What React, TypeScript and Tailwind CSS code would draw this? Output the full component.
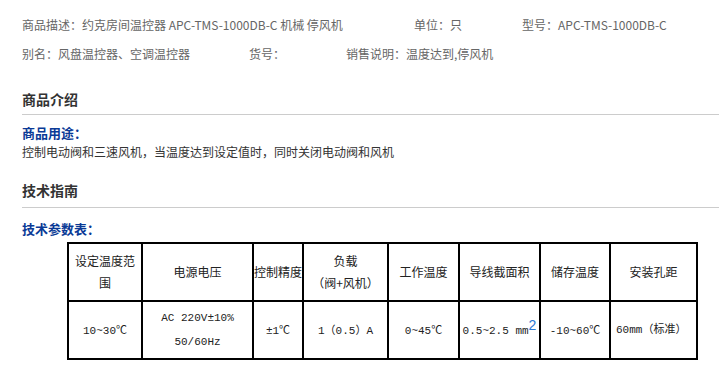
import React from "react";

const cjk = "font-['Microsoft_YaHei','Noto_Sans_CJK_SC',sans-serif]";
const song = "font-['SimSun','Noto_Sans_CJK_SC',sans-serif]";
const mono = "font-['Liberation_Mono','Noto_Sans_CJK_SC',monospace]";

interface Col {
  w: string;
  head: React.ReactNode;
  body: React.ReactNode;
}

const cols: Col[] = [
  {
    w: "w-[74px]",
    head: (
      <>
        设定温度范
        <br />围
      </>
    ),
    body: <span className={`${mono} text-[11px]`}>10~30℃</span>,
  },
  {
    w: "w-[111px]",
    head: "电源电压",
    body: (
      <span className={`${mono} text-[11px] leading-[23px]`}>
        AC 220V±10%
        <br />
        50/60Hz
      </span>
    ),
  },
  { w: "w-[50px]", head: <span className="whitespace-nowrap -mx-[2px]">控制精度</span>, body: <span className={`${mono} text-[11px]`}>±1℃</span> },
  {
    w: "w-[85px]",
    head: (
      <>
        负载
        <br />
        （阀+风机）
      </>
    ),
    body: <span className={`${mono} text-[11px]`}>1（0.5）A</span>,
  },
  { w: "w-[71px]", head: "工作温度", body: <span className={`${mono} text-[11px]`}>0~45℃</span> },
  {
    w: "w-[81px]",
    head: "导线截面积",
    body: (
      <span className={`${mono} text-[11px]`}>
        0.5~2.5 mm
        <sup className="text-[14px] text-[#2a78d4] font-['Liberation_Sans',sans-serif] -top-[0.3em]">2</sup>
      </span>
    ),
  },
  { w: "w-[70px]", head: "储存温度", body: <span className={`${mono} text-[11px]`}>-10~60℃</span> },
  {
    w: "w-[87px]",
    head: "安装孔距",
    body: <span className={`${mono} text-[11px] block text-left pl-[5px]`}>60mm（标准）</span>,
  },
];

export default function App() {
  return (
    <main className={`w-[719px] h-[387px] bg-white overflow-hidden pl-[22px] pt-[10px] ${cjk} text-[12px]`}>
      <div className="flex leading-[29px] text-[#666]">
        <span className="w-[392px] whitespace-nowrap">商品描述：约克房间温控器 APC-TMS-1000DB-C 机械 停风机</span>
        <span className="w-[108px]">单位：只</span>
        <span>型号：APC-TMS-1000DB-C</span>
      </div>
      <div className="flex leading-[29px] text-[#666]">
        <span className="w-[227px]">别名：风盘温控器、空调温控器</span>
        <span className="w-[97px]">货号：</span>
        <span>销售说明：温度达到,停风机</span>
      </div>

      <h2 className="mt-[21px] pb-[5px] leading-[20px] text-[14px] font-bold text-[#333] border-b border-[#ccc]">
        商品介绍
      </h2>
      <h3 className="mt-[9px] leading-[18px] text-[13px] font-bold text-[#0a3a96]">商品用途：</h3>
      <p className="mt-px leading-[18px] text-[12px] text-[#333]">
        控制电动阀和三速风机，当温度达到设定值时，同时关闭电动阀和风机
      </p>

      <h2 className="mt-[19px] pb-[7px] leading-[20px] text-[14px] font-bold text-[#333] border-b border-[#ccc]">
        技术指南
      </h2>
      <h3 className="mt-[12px] leading-[18px] text-[13px] font-bold text-[#0a3a96]">技术参数表：</h3>

      <table className={`mt-[4px] ml-[45px] border-collapse border-2 border-black text-[#222] ${song}`}>
        <tbody>
          <tr className="h-[58px]">
            {cols.map((c, i) => (
              <td key={i} className={`${c.w} border-2 border-black text-center align-middle p-0 text-[12px] leading-[22px]`}>
                {c.head}
              </td>
            ))}
          </tr>
          <tr className="h-[58px]">
            {cols.map((c, i) => (
              <td key={i} className={`${c.w} border-2 border-black text-center align-middle p-0 leading-[20px]`}>
                {c.body}
              </td>
            ))}
          </tr>
        </tbody>
      </table>
    </main>
  );
}
